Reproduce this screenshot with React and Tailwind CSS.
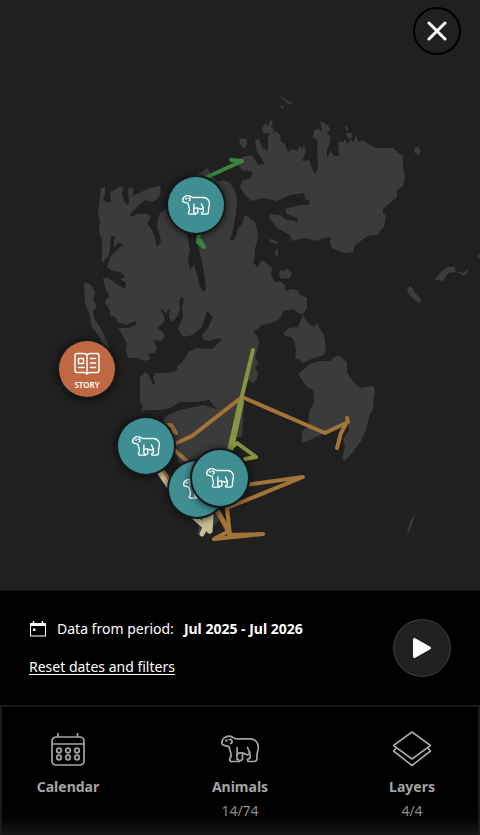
import { useState } from 'react'
import clsx from 'clsx'

const MAP_WIDTH = 480
const MAP_HEIGHT = 590

const LAND = [
  // Spitsbergen
  'M101 188L105 187L105 195L103 199L107 203L111 201L110 192L115 190L120 186L123 187L122 193L124 201L127 205L129 202L128 189L131 187L134 190L132 196L139 193L150 188L160 186L161 193L158 198L153 202L145 200L139 205L130 214L132 217L137 214L148 214L151 218L147 223L152 230L155 238L157 247L161 242L160 236L157 227L158 219L160 213L165 210L170 200L185 180L202 172L207 168L213 177L218 182L223 180L230 183L234 189L237 197L236 213L233 230L230 240L233 241L236 236L238 228L242 224L244 217L247 215L251 220L255 222L258 233L257 243L255 248L255 253L253 263L258 267L261 261L264 261L272 268L271 276L275 282L280 281L285 285L286 291L291 289L297 290L299 294L307 298L307 308L303 314L298 313L293 309L283 311L282 316L278 320L268 324L260 325L259 329L253 331L257 336L259 341L258 348L255 357L259 363L255 368L258 373L257 379L253 383L248 380L243 400L244 408L243 417L242 437L236 437L228 447L222 480L218 513L219 520L213 527L210 535L203 532L197 535L199 526L195 518L185 480L175 450L165 435L160 423L168 415L180 410L203 405L217 409L209 400L197 402L180 402L170 408L160 410L145 410L141 412L143 406L140 403L140 377L145 372L149 375L153 385L155 384L153 377L156 373L165 373L172 372L177 370L177 366L185 359L188 352L197 348L212 349L218 343L222 340L218 338L210 341L203 340L202 335L208 328L213 317L207 311L205 317L202 327L193 335L183 337L178 328L183 317L182 308L184 298L181 297L179 301L180 309L178 315L173 322L169 318L170 308L166 313L160 308L163 314L165 320L161 325L157 328L163 332L165 337L161 341L153 340L157 348L154 353L148 353L150 359L145 361L137 358L128 358L126 350L127 344L125 340L121 333L118 328L129 328L137 324L135 321L126 325L118 322L115 317L110 315L110 310L105 303L107 298L110 297L105 287L103 278L108 278L115 283L125 289L126 283L120 279L126 277L120 272L113 271L107 267L110 257L115 252L123 244L118 243L114 248L114 240L116 237L111 236L110 247L109 255L102 263L102 240L99 232L100 222L98 213Z',
  // Prins Karls Forland
  'M84 282L91 285L95 292L93 300L97 306L93 312L95 320L100 327L104 335L109 347L104 345L98 335L92 327L89 313L85 303Z',
  // Nordaustlandet
  'M242 157L252 155L258 165L265 164L261 158L257 152L255 140L259 139L262 147L268 151L268 137L270 134L275 131L280 135L281 142L285 144L288 152L293 149L297 151L300 146L302 149L304 145L306 152L302 161L309 160L311 165L314 174L318 170L317 145L318 141L313 137L314 130L319 129L322 132L320 121L328 125L330 130L327 133L331 138L329 145L327 150L327 158L331 151L334 156L339 156L338 143L341 141L343 143L345 139L348 144L351 139L353 143L356 135L358 142L363 140L367 143L374 147L377 148L393 148L398 153L403 156L403 167L405 178L403 186L397 190L397 197L383 209L383 213L386 216L384 227L377 235L368 236L355 245L353 252L343 253L332 248L330 242L331 237L324 238L315 241L305 238L292 241L290 235L277 228L269 217L270 214L280 215L285 219L298 222L297 218L287 214L285 209L300 205L309 205L310 201L305 199L304 193L290 195L277 201L263 198L252 201L245 195L240 187L242 181L250 178L253 172L242 170L238 165Z',
  // Barentsoya
  'M283 333L289 328L298 327L303 315L308 323L314 327L317 323L320 329L324 335L326 347L324 355L314 358L302 363L299 359L295 359L296 349L294 340L291 337L285 336Z',
  // Edgeoya
  'M298 374L310 364L320 361L330 361L334 357L340 356L347 362L347 372L354 383L360 388L373 386L375 390L373 402L374 408L370 414L366 430L361 441L353 452L345 461L342 458L345 447L343 440L349 430L348 423L340 427L325 433L312 439L302 443L302 431L308 427L309 412L314 402L313 390L307 387Z',
  // Kongsoya and Svenskoya
  'M435 279L440 273L447 267L455 267L455 271L463 273L470 268L464 276L457 272L448 273L443 281L436 280Z',
  'M407 288L411 286L415 293L421 299L420 303L417 302L409 295Z',
  'M477 256L480 254L480 259Z',
  // Islets
  'M239 140L243 138L247 140L247 144L245 149L241 146Z',
  'M262 128L265 123L268 126L270 121L272 120L273 123L271 126L274 130L272 134L263 133Z',
  'M281 95L284 99L287 100L290 103L292 101L293 103L290 105L286 102L281 98Z',
  'M280 106L284 106L283 109Z',
  'M345 125L348 128L348 131L345 128Z',
  'M346 133L351 133L353 136L350 139L347 137Z',
  'M414 148L418 147L421 151L419 155L415 153Z',
  'M269 239L274 240L278 243L277 244L270 242Z',
  'M275 251L278 249L278 255L276 256Z',
  'M280 270L284 271L286 268L292 273L290 278L281 279L279 275Z',
  'M406 537L410 522L416 512L411 527Z',
]

const FJORDS = [
  'M186 230L197 230L197 240L201 258L204 272L206 288L204 292L200 287L197 275L194 264L190 270L188 259L190 250Z',
]

const TRACKS = [
  { color: '#36883f', width: 4, d: 'M205 178L242 161L231 160' },
  { color: '#36883f', width: 4, d: 'M199 232L198 242L204 247L200 240' },
  { color: '#a37438', width: 4, d: 'M170 446L192 436L242 397L325 433L348 422L347 418M347 422L341 433L337 448' },
  { color: '#a37438', width: 4, d: 'M166 425L171 425L176 433L168 430' },
  { color: '#a37438', width: 4, d: 'M170 446L190 464' },
  { color: '#a37438', width: 6, d: 'M158 466L175 490' },
  { color: '#a37438', width: 4, d: 'M245 485L303 477L227 508L230 535L214 505' },
  { color: '#a37438', width: 4, d: 'M214 539L263 534L229 535M214 539L229 531L217 509' },
  { color: '#889342', width: 4, d: 'M253 350L229 450' },
  { color: '#889342', width: 6, d: 'M241 402L231 448' },
  { color: '#889342', width: 4, d: 'M231 448L237 443L256 457L245 459' },
  { color: '#c9bd94', width: 5, d: 'M160 473L172 491M194 517L210 531L211 515L202 534M203 515L207 526' },
]

const MARKERS = [
  { id: 'bear-north', x: 196, y: 205 },
  { id: 'bear-west', x: 146, y: 446 },
  { id: 'bear-south', x: 197, y: 489 },
  { id: 'bear-east', x: 220, y: 478 },
]

function BearIcon({ className, strokeWidth = 1.8 }) {
  return (
    <svg
      viewBox="0 0 40 30"
      className={className}
      fill="none"
      stroke="currentColor"
      strokeWidth={strokeWidth}
      strokeLinecap="round"
      strokeLinejoin="round"
      aria-hidden="true"
    >
      <path d="M2 7.5C2 5 5.500 2.200 9 2.200C12.500 2.200 13.500 4.800 17 4.800L30 4.800C35.500 4.800 38.500 9 38.300 13.500C38 17.500 36.500 19.500 37 24C37 26.500 36 27.500 34 27.500L28 27.500L27.500 25.500L30 24C30.600 20.500 29.500 19.500 29.500 18" />
      <path d="M2 7.500C1.500 9.500 2 11 4 11.200C6 12 7.500 12.200 9 12.500C9.500 15.500 11.500 19 11 22.500L9.500 25.500L10.500 27.500L18.500 27.500L18.500 25.500L17 25L17.200 13.500" />
      <path d="M17.200 20C19 18.500 23 18.500 25 20C27.500 21.500 29.500 20.500 29.500 18.500L27.500 13.500" />
      <path d="M22.500 20L22.500 25.500L19 27.500M9.500 5.500C12.500 5 13 9 10.500 9.500" />
      <circle cx="6.500" cy="6.500" r="0.500" />
    </svg>
  )
}

function CalendarIcon({ className }) {
  return (
    <svg viewBox="0 0 34 34" className={className} fill="none" stroke="currentColor" strokeWidth="1.7" aria-hidden="true">
      <rect x="1" y="5" width="32" height="28" rx="4" />
      <path d="M1 12H33M7 1V5M26.500 1V5" />
      {[8, 17, 26].map((cx) => (
        <g key={cx}>
          <circle cx={cx} cy="18.500" r="2.300" />
          <circle cx={cx} cy="25.500" r="2.300" />
        </g>
      ))}
    </svg>
  )
}

function LayersIcon({ className }) {
  return (
    <svg viewBox="0 0 40 36" className={className} fill="none" stroke="currentColor" strokeWidth="1.6" strokeLinejoin="round" aria-hidden="true">
      <path d="M20 1L38.500 14.500L20 28L1.500 14.500Z" />
      <path d="M4.500 17L1.500 20L20 34.500L38.500 20L35.500 17" />
    </svg>
  )
}

function StoryIcon({ className }) {
  return (
    <svg viewBox="0 0 26 24" className={className} fill="none" stroke="currentColor" strokeWidth="1.500" strokeLinecap="round" strokeLinejoin="round" aria-hidden="true">
      <path d="M13 3C12 1.500 11 1.500 9.500 1.500H3C1.700 1.500 1 2.200 1 3.500V18.500C1 20 1.700 20.500 3 20.500H10C11.500 20.500 12 21 13 22C14 21 14.500 20.500 16 20.500H23C24.300 20.500 25 20 25 18.500V3.500C25 2.200 24.300 1.500 23 1.500H16.500C15 1.500 14 1.500 13 3V22" />
      <rect x="4.500" y="6.500" width="5" height="5" />
      <path d="M4.500 15.500H10M16.500 6.500H21.500M16.500 11H21.500M16.500 15.500H21.500" />
    </svg>
  )
}

function PeriodIcon({ className }) {
  return (
    <svg viewBox="0 0 18 18" className={className} fill="none" stroke="currentColor" aria-hidden="true">
      <rect x="1.500" y="3.500" width="15" height="12.500" />
      <path d="M4.500 1V4M13.500 1V4" strokeWidth="1.500" />
      <path d="M1 4.500H17" strokeWidth="3" />
      <rect x="4" y="8.500" width="2.500" height="2.500" fill="currentColor" stroke="none" />
    </svg>
  )
}

const NAV_ITEMS = [
  { name: 'Calendar', icon: <CalendarIcon className="h-[34px] w-[34px]" /> },
  { name: 'Animals', icon: <BearIcon className="h-[30px] w-10" strokeWidth={1.7} />, count: '14/74' },
  { name: 'Layers', icon: <LayersIcon className="h-9 w-10" />, count: '4/4' },
]

function Marker({ x, y, label, className, children }) {
  return (
    <button
      aria-label={label}
      className={clsx(
        'absolute flex h-14 w-14 -translate-x-1/2 -translate-y-1/2 flex-col items-center justify-center rounded-full text-white shadow-[0_0_0_2px_#14191b,0_1px_6px_3px_rgba(0,0,0,0.5)]',
        className
      )}
      style={{ left: `${(x / MAP_WIDTH) * 100}%`, top: `${(y / MAP_HEIGHT) * 100}%` }}
    >
      {children}
    </button>
  )
}

function TrackMap() {
  return (
    <div className="relative w-full">
      <svg viewBox={`0 0 ${MAP_WIDTH} ${MAP_HEIGHT}`} className="block h-auto w-full" role="img" aria-label="Map of Svalbard">
        <g fill="#3b3b3b">
          {LAND.map((d) => <path key={d} d={d} />)}
        </g>
        <g fill="#202020">
          {FJORDS.map((d) => <path key={d} d={d} />)}
        </g>
        <g fill="none" strokeLinecap="round" strokeLinejoin="round">
          {TRACKS.map((track) => (
            <path key={track.d} d={track.d} stroke={track.color} strokeWidth={track.width} />
          ))}
        </g>
      </svg>

      <Marker x={87} y={369} className="bg-[#bf6843]">
        <StoryIcon className="mt-1 h-6 w-[26px]" />
        <span className="mt-1 text-[8px] font-semibold leading-[10px]">STORY</span>
      </Marker>
      {MARKERS.map((marker) => (
        <Marker key={marker.id} x={marker.x} y={marker.y} label="Polar bear" className="bg-[#3f8e91]">
          <BearIcon className="h-[22px] w-[30px]" />
        </Marker>
      ))}
    </div>
  )
}

export default function App() {
  const [playing, setPlaying] = useState(false)

  return (
    <div className="flex min-h-screen flex-col bg-black font-['Noto_Sans',sans-serif] text-white">
      <main className="relative flex-1 bg-[#202020]">
        <TrackMap />
        <button
          aria-label="Close"
          className="absolute right-[19px] top-[7px] flex h-12 w-12 items-center justify-center rounded-full border-2 border-black bg-[#202020]"
        >
          <svg viewBox="0 0 20 20" className="h-5 w-5" fill="none" stroke="currentColor" strokeWidth="3" strokeLinecap="round" aria-hidden="true">
            <path d="M2 2L18 18M18 2L2 18" />
          </svg>
        </button>
      </main>

      <section className="flex items-center justify-between border-t border-[#161616] px-[29px] py-7">
        <div className="flex flex-col items-start gap-[18px] text-sm leading-5">
          <p className="flex items-center gap-[10px]">
            <PeriodIcon className="h-[18px] w-[18px]" />
            <span>Data from period:</span>
            <strong className="font-bold">Jul 2025 - Jul 2026</strong>
          </p>
          <button className="underline underline-offset-2">Reset dates and filters</button>
        </div>
        <button
          aria-label={playing ? 'Pause' : 'Play'}
          onClick={() => setPlaying(!playing)}
          className="flex h-[58px] w-[58px] items-center justify-center rounded-full border border-[#3c3c3c] bg-[#202020]"
        >
          <svg viewBox="0 0 20 22" className="h-[22px] w-5" fill="currentColor" stroke="currentColor" strokeWidth="3" strokeLinejoin="round" aria-hidden="true">
            {playing ? <path d="M4 3V19M15 3V19" /> : <path d="M2.500 2.500V19.500L17.500 11Z" />}
          </svg>
        </button>
      </section>

      <nav className="flex justify-between border-2 border-b-0 border-[#1a1a1a] bg-linear-to-b from-black from-70% to-[#161616] px-[18px] pb-3 pt-6">
        {NAV_ITEMS.map((item) => (
          <button key={item.name} className="flex w-24 flex-col items-center text-sm leading-6 text-[#a5a5a5]">
            <span className="flex h-9 items-center justify-center">{item.icon}</span>
            <span className="mt-2 font-bold">{item.name}</span>
            {item.count && <span className="text-[#8c8c8c]">{item.count}</span>}
          </button>
        ))}
      </nav>
    </div>
  )
}
